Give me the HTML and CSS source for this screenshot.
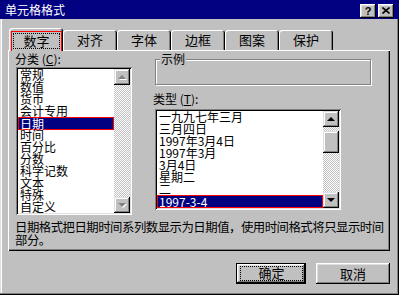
FILE: index.html
```html
<!DOCTYPE html>
<html lang="zh-CN">
<head>
    <meta charset="UTF-8">
    <title>单元格格式</title>
    <link rel="stylesheet" href="styles.css">
</head>
<body>
    <div class="window">
        <div class="titlebar">
            <span class="title">单元格格式</span>
            <div class="title-btns">
                <span class="tbtn help">?</span>
                <span class="tbtn close">
                    <svg width="8" height="7" viewBox="0 0 8 7"><path d="M0.5 0.5 L7.5 6.5 M7.5 0.5 L0.5 6.5" stroke="#000" stroke-width="1.6"/></svg>
                </span>
            </div>
        </div>

        <div class="dialog">
            <div class="tabs">
                <div class="tab active"><span class="mark"><span class="focus">数字</span></span></div>
                <div class="tab">对齐</div>
                <div class="tab">字体</div>
                <div class="tab">边框</div>
                <div class="tab">图案</div>
                <div class="tab">保护</div>
            </div>

            <div class="panel">
                <div class="panel-row">
                    <div class="col-left">
                        <div class="label">分类 (<u>C</u>):</div>
                        <div class="listbox cat">
                            <ul class="items">
                                <li>常规</li>
                                <li>数值</li>
                                <li>货币</li>
                                <li>会计专用</li>
                                <li class="sel">日期</li>
                                <li>时间</li>
                                <li>百分比</li>
                                <li>分数</li>
                                <li>科学记数</li>
                                <li>文本</li>
                                <li>特殊</li>
                                <li>自定义</li>
                            </ul>
                            <div class="vscroll off">
                                <span class="sbtn"><i class="arr up"></i></span>
                                <span class="track"></span>
                                <span class="sbtn"><i class="arr down"></i></span>
                            </div>
                        </div>
                    </div>

                    <div class="col-right">
                        <div class="sample"><span class="legend">示例</span></div>
                        <div class="label type-label">类型 (<u>T</u>):</div>
                        <div class="listbox types">
                            <ul class="items">
                                <li>一九九七年三月</li>
                                <li>三月四日</li>
                                <li>1997年3月4日</li>
                                <li>1997年3月</li>
                                <li>3月4日</li>
                                <li>星期二</li>
                                <li>二</li>
                                <li class="sel">1997-3-4</li>
                            </ul>
                            <div class="vscroll">
                                <span class="sbtn"><i class="arr up"></i></span>
                                <span class="track"><span class="thumb"></span></span>
                                <span class="sbtn"><i class="arr down"></i></span>
                            </div>
                        </div>
                    </div>
                </div>
                <p class="desc">日期格式把日期时间系列数显示为日期值，使用时间格式将只显示时间<br>部分。</p>
            </div>

            <div class="buttons">
                <button class="btn default"><span class="focus">确定</span></button>
                <button class="btn cancel">取消</button>
            </div>
        </div>
    </div>
</body>
</html>
```

FILE: styles.css
```css
* { margin: 0; padding: 0; box-sizing: border-box; }
body { width: 399px; height: 295px; overflow: hidden; background: #c0c0c0; color: #000; font-family: "Noto Sans CJK SC", "Liberation Sans", sans-serif; font-size: 12px; }
ul { list-style: none; }

.window { width: 399px; height: 295px; display: flex; flex-direction: column; box-shadow: inset -1px -1px #000, inset -2px -2px #808080, inset 1px 0 #dfdfdf, inset 2px 0 #fff; }

.titlebar { height: 19px; flex: none; display: flex; align-items: center; justify-content: space-between; padding: 0 5px; background: #000080; color: #fff; }
.title { font-size: 12px; line-height: 19px; }
.title-btns { display: flex; gap: 2px; margin-top: 2px; }
.tbtn { width: 16px; height: 14px; display: flex; align-items: center; justify-content: center; background: #c0c0c0; color: #000; font: bold 11px "Liberation Sans", sans-serif; box-shadow: inset -1px -1px #000, inset 1px 1px #fff, inset -2px -2px #808080, inset 2px 2px #dfdfdf; }

.dialog { flex: 1; display: flex; flex-direction: column; padding: 9px 9px 0 8px; }

.tabs { height: 22px; display: flex; align-items: flex-end; padding-left: 1px; }
.tab { width: 54px; height: 20px; font-size: 13px; line-height: 19px; text-align: center; background: #c0c0c0; border-radius: 3px 3px 0 0; box-shadow: inset 1px 1px #fff, inset -1px 0 #000, inset -2px 0 #808080; }
.tab.active { height: 23px; margin-bottom: -1px; position: relative; z-index: 1; padding: 3px 1px 0 2px; }
.mark { display: block; height: 20px; border: 1px solid #f00; border-bottom: none; padding: 2px 2px 0 2px; }
.focus { display: block; height: 14px; line-height: 13px; outline: 1px dotted #000; }

.panel { height: 201px; padding: 2px; display: flex; flex-direction: column; box-shadow: inset 1px 1px #fff, inset -1px -1px #000, inset -2px -2px #808080; }
.panel-row { display: flex; padding-left: 6px; }
.col-left { width: 116px; }
.col-right { width: 216px; margin-left: 23px; display: flex; flex-direction: column; }

.label { height: 15px; line-height: 14px; font-size: 12px; margin-left: -1px; }
.label u { text-decoration: underline; }

.listbox { display: flex; padding: 2px; background: #fff; box-shadow: inset 1px 1px #808080, inset -1px -1px #fff, inset 2px 2px #000, inset -2px -2px #dfdfdf; }
.listbox .items { flex: 1; overflow: hidden; }
.listbox li { height: 12px; line-height: 12px; padding-left: 2px; white-space: nowrap; }
.listbox li.sel { background: #000080; color: #fff; border: 1px solid #f00; padding-left: 1px; line-height: 11px; height: 13px; margin-bottom: -1px; }
.cat { height: 148px; }
.types { width: 186px; height: 101px; margin-top: 2px; }

.vscroll { width: 16px; display: flex; flex-direction: column; }
.sbtn { width: 16px; height: 16px; flex: none; display: flex; align-items: center; justify-content: center; background: #c0c0c0; box-shadow: inset -1px -1px #000, inset 1px 1px #dfdfdf, inset -2px -2px #808080, inset 2px 2px #fff; }
.track { flex: 1; background-image: repeating-conic-gradient(#fff 0 25%, #c0c0c0 0 50%); background-size: 2px 2px; }
.thumb { display: block; width: 16px; height: 22px; margin-top: 4px; background: #c0c0c0; box-shadow: inset -1px -1px #000, inset 1px 1px #dfdfdf, inset -2px -2px #808080, inset 2px 2px #fff; }
.arr { display: block; width: 0; height: 0; border-left: 4px solid transparent; border-right: 4px solid transparent; }
.arr.up { border-bottom: 4px solid #000; }
.arr.down { border-top: 4px solid #000; }
.off .arr.up { border-bottom-color: #808080; filter: drop-shadow(1px 1px 0 #fff); }
.off .arr.down { border-top-color: #808080; filter: drop-shadow(1px 1px 0 #fff); }

.sample { position: relative; height: 26px; margin-top: 7px; border: 1px solid #808080; box-shadow: inset 1px 1px #fff, 1px 1px #fff; }
.legend { position: absolute; top: -8px; left: 4px; padding: 0 1px; line-height: 14px; background: #c0c0c0; font-size: 12px; }
.type-label { margin-top: 7px; margin-left: -2px; }

.desc { margin: 6px -1px 0 5px; font-size: 12.4px; line-height: 13px; letter-spacing: -0.5px; white-space: nowrap; }

.buttons { display: flex; justify-content: flex-end; gap: 10px; margin-top: 12px; }
.btn { height: 21px; font-family: "Noto Sans CJK SC", sans-serif; font-size: 13px; line-height: 13px; background: #c0c0c0; border: none; color: #000; box-shadow: inset -1px -1px #000, inset 1px 1px #fff, inset -2px -2px #808080, inset 2px 2px #dfdfdf; }
.btn.default { width: 70px; padding: 3px 3px 3px 4px; border: 1px solid #000; }
.btn.default .focus { height: 13px; line-height: 12px; }
.btn.cancel { width: 74px; }
```
